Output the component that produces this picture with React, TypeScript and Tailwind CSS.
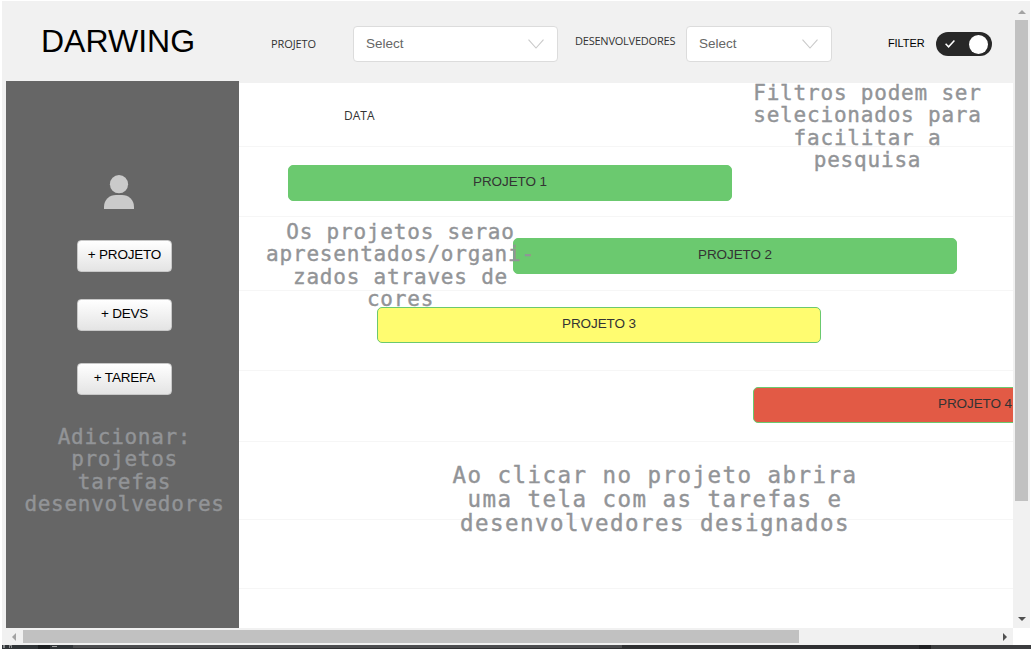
import React from "react";

const ARIAL = "font-['Liberation_Sans',Arial,sans-serif]";
const OPEN = "font-['Open_Sans','Noto_Sans',sans-serif]";

function Select({ className }: { className: string }) {
  return (
    <div className={`flex h-9 shrink-0 items-center justify-between rounded border border-[#dcdcdc] bg-white pr-[13px] pl-3 ${className}`}>
      <span className="-mt-px text-[13.500px] leading-4 text-[#666]">Select</span>
      <svg width="16" height="10" viewBox="0 0 16 10" fill="none" stroke="#c9c9c9" strokeWidth="1.1">
        <path d="M0.5 0.7 8 9 15.5 0.7" />
      </svg>
    </div>
  );
}

function Note({ lines, className }: { lines: string[]; className: string }) {
  return (
    <div className={`pointer-events-none absolute z-10 text-center font-['DejaVu_Sans_Mono',monospace] whitespace-pre text-[#929497] [-webkit-text-stroke:0.4px_#929497] ${className}`}>
      {lines.map((line) => (
        <div key={line}>{line}</div>
      ))}
    </div>
  );
}

function AddButton({ label, className }: { label: string; className: string }) {
  return (
    <button className={`block h-8 w-[95px] rounded border border-[#c8c8c8] bg-linear-to-b from-white to-[#e4e4e4] pb-[2px] text-[13.500px] leading-4 tracking-[-0.200px] text-black ${className}`}>
      {label}
    </button>
  );
}

function Bar({ label, className }: { label: string; className: string }) {
  return (
    <div className={`flex h-9 w-[444px] shrink-0 items-center justify-center rounded-[5px] border border-[#6bc96f] pb-[2px] text-[13.500px] leading-4 tracking-[-0.100px] text-[#333] ${className}`}>
      {label}
    </div>
  );
}

const ROW = "flex shrink-0 items-start border-b border-[#f6f6f6]";

export default function App() {
  return (
    <div className={`relative flex h-[651px] w-[1031px] flex-col overflow-hidden bg-white pt-px pl-[2px] ${ARIAL}`}>
      <div className="flex h-[627px] shrink-0">
        <div className="flex w-[1011px] flex-col overflow-hidden bg-[#f1f1f1]">
          <header className="flex h-[82px] shrink-0 items-start">
            <h1 className="mt-[22px] ml-[39px] w-[229px] shrink-0 text-[32px] leading-9 text-black">DARWING</h1>
            <span className={`mt-[35px] ml-[1px] w-[82px] shrink-0 text-[11px] leading-4 tracking-[-0.1px] text-[#333] ${OPEN}`}>PROJETO</span>
            <Select className="mt-[25px] w-[205px]" />
            <span className={`mt-8 ml-[17px] w-[111px] shrink-0 text-[11px] leading-4 tracking-[-0.220px] text-[#333] ${OPEN}`}>DESENVOLVEDORES</span>
            <Select className="mt-[25px] w-[146px]" />
            <span className="mt-[34px] ml-14 w-12 shrink-0 text-[11px] leading-4 tracking-[-0.100px] text-black">FILTER</span>
            <div className="mt-[31px] flex h-6 w-14 shrink-0 items-center justify-between rounded-full bg-[#282828] pr-1 pl-[9px]">
              <svg width="10" height="8" viewBox="0 0 10 8" fill="none" stroke="white" strokeWidth="1.5">
                <path d="M0.6 3.8 3.6 6.8 9.4 0.6" />
              </svg>
              <div className="h-[19px] w-[19px] rounded-full bg-white" />
            </div>
          </header>

          <div className="flex h-[545px] shrink-0 pl-1">
            <aside className="-mt-[2px] flex h-[547px] w-[233px] shrink-0 flex-col items-start bg-[#666]">
              <svg className="mt-[94px] ml-[98px]" width="30" height="34" viewBox="0 0 30 34" fill="#cacaca">
                <circle cx="15" cy="9.2" r="9.1" />
                <path d="M0 34V32C0 24.5 5.5 20 12 20h6c6.500 0 12 4.500 12 12v2Z" />
              </svg>
              <AddButton label="+ PROJETO" className="mt-[31px] ml-[71px]" />
              <AddButton label="+ DEVS" className="mt-[27px] ml-[71px]" />
              <AddButton label="+ TAREFA" className="mt-8 ml-[71px]" />
            </aside>

            <main className="flex w-[774px] shrink-0 flex-col overflow-hidden bg-white">
              <div className={`${ROW} h-16`}>
                <span className={`mt-[25px] ml-[105px] text-[12px] leading-4 text-[#333] ${OPEN}`}>DATA</span>
              </div>
              <div className={`${ROW} h-[70px]`}>
                <Bar label="PROJETO 1" className="mt-[18px] ml-[49px] bg-[#6bc96f]" />
              </div>
              <div className={`${ROW} h-[74px]`}>
                <Bar label="PROJETO 2" className="mt-[21px] ml-[274px] bg-[#6bc96f]" />
              </div>
              <div className={`${ROW} h-20`}>
                <Bar label="PROJETO 3" className="mt-4 ml-[138px] bg-[#fffc70]" />
              </div>
              <div className={`${ROW} h-[71px]`}>
                <Bar label="PROJETO 4" className="mt-4 ml-[514px] bg-[#e25a45]" />
              </div>
              <div className={`${ROW} h-[78px]`} />
              <div className={`${ROW} h-[69px]`} />
            </main>
          </div>
        </div>

        <div className="flex w-[17px] shrink-0 flex-col items-center bg-[#f1f1f1]">
          <svg className="mt-[9px]" width="8" height="4" viewBox="0 0 8 4" fill="#a3a3a3">
            <path d="M0 4 4 0l4 4Z" />
          </svg>
          <div className="mt-[6px] h-[481px] w-[13px] bg-[#c1c1c1]" />
          <svg className="mt-[116px]" width="8" height="4" viewBox="0 0 8 4" fill="#505050">
            <path d="M0 0h8L4 4Z" />
          </svg>
        </div>
      </div>

      <div className="flex h-[17px] w-[1011px] shrink-0 items-center bg-[#f1f1f1]">
        <svg className="ml-[10px]" width="4" height="8" viewBox="0 0 4 8" fill="#a3a3a3">
          <path d="M4 0v8L0 4Z" />
        </svg>
        <div className="ml-[7px] h-[13px] w-[776px] bg-[#c1c1c1]" />
        <svg className="ml-[204px]" width="4" height="8" viewBox="0 0 4 8" fill="#505050">
          <path d="M0 0v8l4-4Z" />
        </svg>
      </div>
      <div className="flex h-1 shrink-0 bg-[#2f3032]">
        <div className="flex w-[71px] items-start bg-[#303437]">
          <div className="ml-px h-[3px] w-[2px] bg-[#858789]" />
          <div className="ml-1 h-[3px] w-[3px] border-x border-t border-[#858789]" />
          <div className="ml-[26px] h-1 w-3 bg-[#1c1f21]" />
          <div className="mt-px ml-[2px] h-px w-[5px] bg-[#a0a0a0]" />
        </div>
        <div className="h-[3px] w-[549px] bg-[#4d4e50]" />
        <div className="ml-[297px] w-3 bg-[#202123]" />
        <div className="flex-1 bg-[#3c3d3f]" />
      </div>

      <Note
        lines={["Filtros podem ser", "selecionados para", "facilitar a", "pesquisa"]}
        className="top-[82px] left-[747px] w-[241px] text-[21px] leading-[22.300px] tracking-[0.800px]"
      />
      <Note
        lines={["Os projetos serao", "apresentados/organi-", "zados atraves de", "cores"]}
        className="top-[221px] left-[265px] w-[271px] text-[21px] leading-[22.300px] tracking-[0.800px]"
      />
      <Note
        lines={["Adicionar:", "projetos", "tarefas", "desenvolvedores"]}
        className="top-[426px] left-[14px] w-[221px] text-[21px] leading-[22.300px] tracking-[0.700px]"
      />
      <Note
        lines={["Ao clicar no projeto abrira", "uma tela com as tarefas e", "desenvolvedores designados"]}
        className="top-[463px] left-[435px] w-[440px] text-[22.500px] leading-6 tracking-[1.450px]"
      />
    </div>
  );
}
